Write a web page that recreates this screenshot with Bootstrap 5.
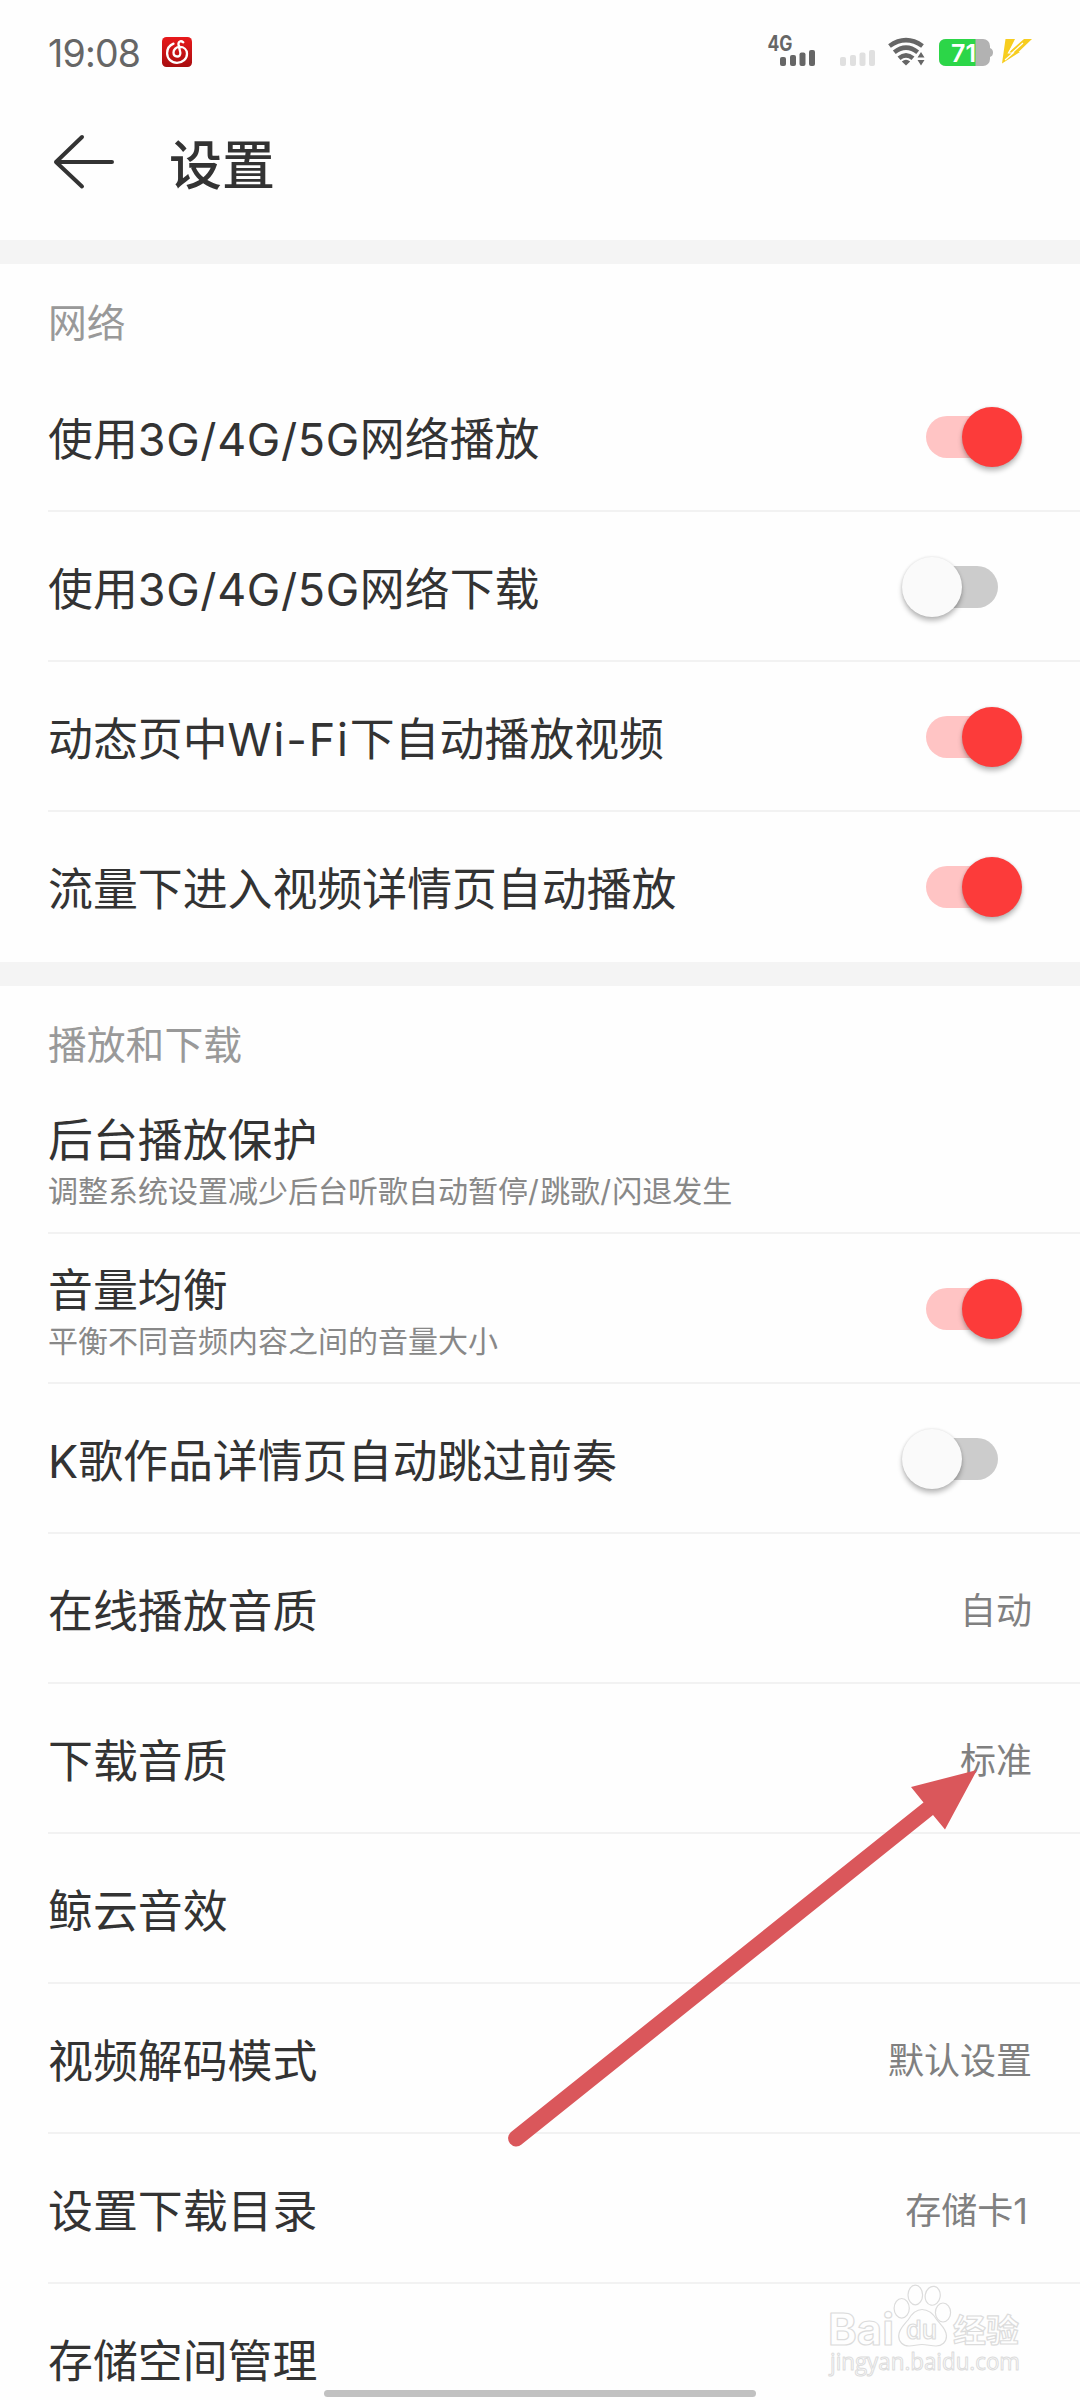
<!DOCTYPE html>
<html lang="zh-CN">
<head>
<meta charset="utf-8">
<meta name="viewport" content="width=device-width, initial-scale=1">
<title>设置</title>
<link href="https://cdn.jsdelivr.net/npm/bootstrap@5.3.0/dist/css/bootstrap.min.css" rel="stylesheet">
<style>
  body { font-family: Inter, "Noto Sans CJK SC", sans-serif; color: #333; background: #fefefe; }
  .screen { width: 1080px; height: 2400px; background: #fefefe; }
  .status-bar { height: 104px; padding: 0 48px; color: #666; }
  .clock { font-size: 37.5px; line-height: 40px; letter-spacing: -.8px; width: 114px; padding-top: 3px; }
  .title-bar { height: 136px; padding: 0 48px; }
  .back-icon { margin-top: 24px; }
  .page-title { font-size: 53px; font-weight: 500; line-height: 64px; margin: 30px 0 0 51px; }
  .divider { height: 24px; background: #f4f4f4; }
  .section-title { height: 98px; padding: 30px 0 0 48px; font-size: 38.8px; font-weight: 400; line-height: 58px; color: #999; }
  .setting { height: 150px; margin-left: 48px; padding-right: 48px; border-bottom: 2px solid #f2f2f2; }
  .setting.final { border-bottom-color: transparent; }
  .label { font-size: 44.9px; line-height: 60px; padding-top: 7px; white-space: nowrap; }
  .two-line { padding-top: 8px; }
  .two-line .label { line-height: 58px; padding-top: 0; }
  .net { letter-spacing: .65px; }
  .wifi { letter-spacing: 1.8px; }
  .hint { font-size: 30px; line-height: 42px; color: #888; white-space: nowrap; }
  .hint .slash { letter-spacing: 1.3px; }
  .value { font-size: 36px; line-height: 48px; padding-top: 6px; color: #808080; }
  .toggle { width: 72px; height: 42px; border-radius: 21px; background: #ccc; margin: 1px 34px 0 0; }
  .toggle::after { content: ""; position: absolute; width: 60px; height: 60px; border-radius: 50%; left: -24px; top: -9px; background: #fafafa; box-shadow: 0 4px 5px rgba(0,0,0,.25), 0 0 3px rgba(0,0,0,.12); }
  .toggle.on { background: #ffc4c4; }
  .toggle.on::after { left: 36px; background: #fc3b3a; }
  .pointer { left: 500px; top: 1760px; }
  .watermark { left: 820px; top: 2275px; }
  .home-bar { left: 324px; top: 2390px; width: 432px; height: 7px; background: #c1c1c1; }
</style>
</head>
<body>
<main class="screen position-relative overflow-hidden">
  <header class="status-bar d-flex align-items-center justify-content-between">
    <div class="d-flex align-items-center">
      <span class="clock">19:08</span>
      <svg width="30" height="30" viewBox="0 0 30 30">
        <defs><linearGradient id="red" x2="0" y2="1"><stop stop-color="#e8191b"/><stop offset="1" stop-color="#a80e10"/></linearGradient></defs>
        <rect width="30" height="30" rx="4.5" fill="url(#red)"/>
        <path d="M11.5 6.6C7.200 8.400 5.100 12.300 5.100 16.200 5.100 21.700 9.500 25.800 15 25.800 20.700 25.800 25 21.700 25 16.700 25 12.500 21.800 9.900 17.900 9.900 14 9.900 11.500 12.600 11.500 15.600 11.500 18 13.100 19.500 15.100 19.500 17.300 19.500 18.700 17.900 18.300 15.500L16.600 8.200C15.800 4.800 18.600 3 21.300 5.300" fill="none" stroke="#fff" stroke-width="2.300" stroke-linecap="round"/>
      </svg>
    </div>
    <svg width="265" height="40" viewBox="767 32 265 40">
      <text x="767.500" y="51" font-family="Inter, sans-serif" font-size="21" font-weight="700" fill="#666" textLength="25" lengthAdjust="spacingAndGlyphs">4G</text>
      <g fill="#666"><rect x="780" y="57" width="6" height="9" rx="2"/><rect x="790" y="55" width="6" height="11" rx="2"/><rect x="799.500" y="52.500" width="6" height="13.500" rx="2"/><rect x="809" y="50" width="6" height="16" rx="2"/></g>
      <g fill="#e0e0e0"><rect x="840" y="57" width="6" height="9" rx="2"/><rect x="850" y="55" width="6" height="11" rx="2"/><rect x="859.500" y="52.500" width="6" height="13.500" rx="2"/><rect x="869" y="50" width="6" height="16" rx="2"/></g>
      <g fill="none" stroke="#666" stroke-width="4.600">
        <path d="M889.500 46Q906 34.200 922.500 46"/>
        <path d="M894.300 52.200Q906 43 917.700 52.200"/>
        <path d="M899 58.200Q906 52.400 913 58.200"/>
      </g>
      <path d="M901.800 61.500Q906 58.200 910.200 61.500L906 65.500ZM917.500 57.500 921 52 924.500 57.500ZM917.500 60 921 65.500 924.500 60Z" fill="#666"/>
      <rect x="939" y="39" width="51" height="27" rx="7" fill="#b2b2b2"/>
      <path d="M990 48q3 1 3 4.500t-3 4.500Z" fill="#b2b2b2"/>
      <path d="M946 39H975.500V66H946q-7 0-7-7V46q0-7 7-7Z" fill="#2cd648"/>
      <text x="951" y="61.500" font-family="Inter, sans-serif" font-size="24.500" font-weight="600" fill="#fff" textLength="25" lengthAdjust="spacingAndGlyphs">71</text>
      <path d="M1005.500 39H1015L1008 53 1024 39H1032L1018.500 52H1020L1002 63.500Z" fill="#f7cd1f"/>
      <path d="M1017.500 39 1008.500 53H1013L1005 60M1012 53 1023 43" fill="none" stroke="#fefefe" stroke-width="1.200"/>
    </svg>
  </header>
  <nav class="title-bar d-flex">
    <svg class="back-icon" width="70" height="68" viewBox="0 0 70 68" fill="none" stroke="#333" stroke-width="4" stroke-linecap="round" stroke-linejoin="round"><path d="M34 9 8 34 34 58.500M8 34H64"/></svg>
    <h1 class="page-title">设置</h1>
  </nav>
  <div class="divider"></div>
  <section>
    <h2 class="section-title mb-0">网络</h2>
    <div class="setting d-flex align-items-center justify-content-between"><span class="label">使用<span class="net">3G/4G/5G</span>网络播放</span><span class="toggle on position-relative"></span></div>
    <div class="setting d-flex align-items-center justify-content-between"><span class="label">使用<span class="net">3G/4G/5G</span>网络下载</span><span class="toggle position-relative"></span></div>
    <div class="setting d-flex align-items-center justify-content-between"><span class="label">动态页中<span class="wifi">Wi-Fi</span>下自动播放视频</span><span class="toggle on position-relative"></span></div>
    <div class="setting final d-flex align-items-center justify-content-between"><span class="label">流量下进入视频详情页自动播放</span><span class="toggle on position-relative"></span></div>
  </section>
  <div class="divider"></div>
  <section>
    <h2 class="section-title mb-0">播放和下载</h2>
    <div class="setting d-flex align-items-center"><div class="two-line d-flex flex-column"><span class="label">后台播放保护</span><span class="hint">调整系统设置减少后台听歌自动暂停<span class="slash">/</span>跳歌<span class="slash">/</span>闪退发生</span></div></div>
    <div class="setting d-flex align-items-center justify-content-between"><div class="two-line d-flex flex-column"><span class="label">音量均衡</span><span class="hint">平衡不同音频内容之间的音量大小</span></div><span class="toggle on position-relative"></span></div>
    <div class="setting d-flex align-items-center justify-content-between"><span class="label">K歌作品详情页自动跳过前奏</span><span class="toggle position-relative"></span></div>
    <div class="setting d-flex align-items-center justify-content-between"><span class="label">在线播放音质</span><span class="value">自动</span></div>
    <div class="setting d-flex align-items-center justify-content-between"><span class="label">下载音质</span><span class="value">标准</span></div>
    <div class="setting d-flex align-items-center"><span class="label">鲸云音效</span></div>
    <div class="setting d-flex align-items-center justify-content-between"><span class="label">视频解码模式</span><span class="value">默认设置</span></div>
    <div class="setting d-flex align-items-center justify-content-between"><span class="label">设置下载目录</span><span class="value pe-1">存储卡1</span></div>
    <div class="setting d-flex align-items-center"><span class="label">存储空间管理</span></div>
  </section>

  <svg class="pointer position-absolute" width="490" height="400" viewBox="500 1760 490 400">
    <path d="M977 1770 911 1787 923.500 1802.500 511 2132A8 8 0 0 0 521.500 2144.500L933 1815 945 1829.500Z" fill="#da575b"/>
  </svg>
  <svg class="watermark position-absolute" width="215" height="115" viewBox="0 0 215 115">
    <g fill="#fefefe" stroke="#dcdcdc" stroke-width="1.200" stroke-linejoin="round">
      <text x="8" y="70" font-family="Inter, sans-serif" font-size="44" font-weight="700" textLength="66" lengthAdjust="spacingAndGlyphs">Bai</text>
      <text x="133" y="66.500" font-family="Noto Sans CJK SC, sans-serif" font-size="32" font-weight="700" textLength="66" lengthAdjust="spacingAndGlyphs">经验</text>
      <text x="10" y="95" font-family="Open Sans, sans-serif" font-size="23" font-weight="400" stroke-width="1" textLength="190" lengthAdjust="spacingAndGlyphs">jingyan.baidu.com</text>
      <ellipse cx="81.700" cy="33.300" rx="7.600" ry="9.800"/>
      <ellipse cx="95.300" cy="20" rx="7.300" ry="9.800"/>
      <ellipse cx="112.700" cy="20.800" rx="7.500" ry="9.500" transform="rotate(10 112.700 20.800)"/>
      <ellipse cx="123" cy="37.500" rx="7.600" ry="9.500"/>
      <path d="M102 34.500C110 34.500 114 40 117 45 121 50 126.500 54 126.500 61 126.500 67 122 71 116 71 111 71 107 69.500 102 69.500S94 71 89 71C83 71 78.700 67 78.700 61 78.700 54 84 50 88 45 91 40 95 34.500 102 34.500Z"/>
      <text x="86" y="64" font-family="Inter, sans-serif" font-size="26" font-weight="500" textLength="31" lengthAdjust="spacingAndGlyphs">du</text>
    </g>
  </svg>
  <div class="home-bar position-absolute rounded-pill"></div>
</main>
<script src="https://cdn.jsdelivr.net/npm/bootstrap@5.3.0/dist/js/bootstrap.bundle.min.js"></script>
</body>
</html>
